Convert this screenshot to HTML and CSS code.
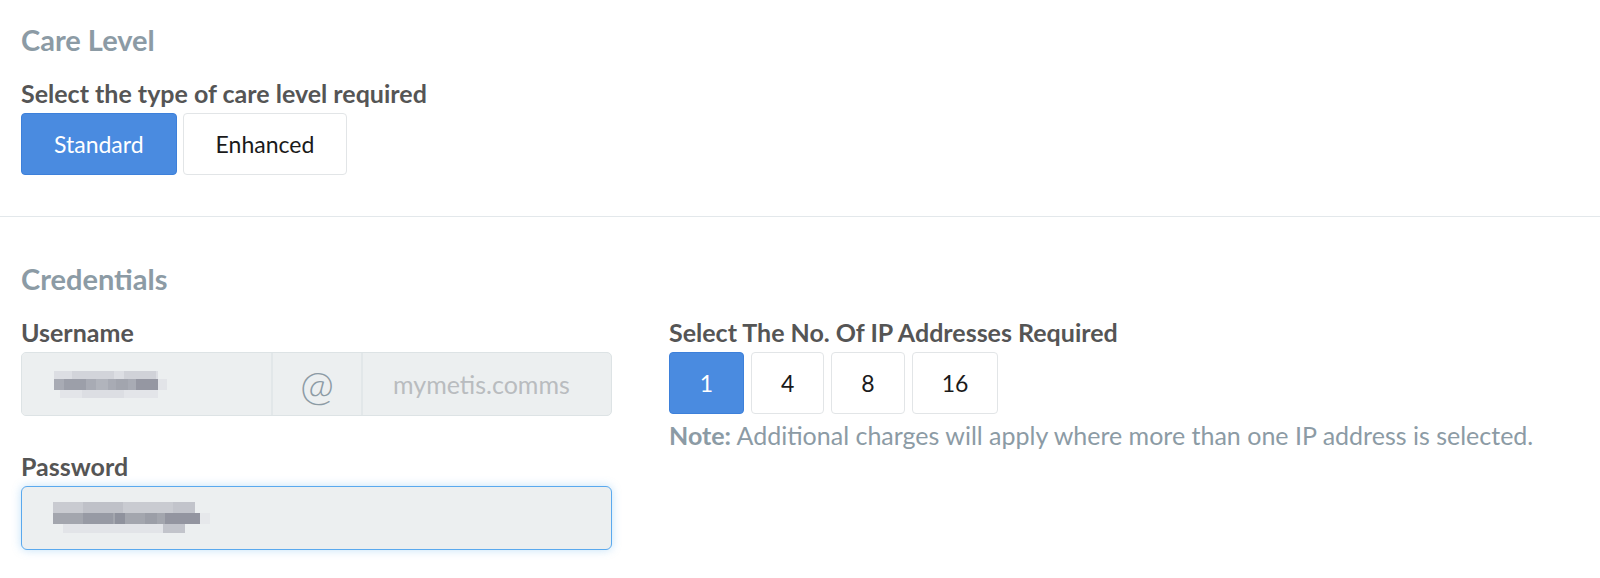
FILE: index.html
```html
<!DOCTYPE html>
<html lang="en">
<head>
    <meta charset="UTF-8">
    <meta name="viewport" content="width=device-width, initial-scale=1.0">
    <title>Order Details</title>
    <link rel="stylesheet" href="styles.css">
</head>
<body>
    <section class="panel">
        <h2 class="panel-title">Care Level</h2>
        <label class="field-label">Select the type of care level required</label>
        <div class="btn-group">
            <button class="opt-btn active">Standard</button>
            <button class="opt-btn">Enhanced</button>
        </div>
    </section>

    <section class="panel panel-bordered">
        <h2 class="panel-title">Credentials</h2>
        <div class="cols">
            <div class="col-left">
                <div class="form-group">
                    <label class="field-label" for="username">Username</label>
                    <div class="input-group">
                        <div class="input-main">
                            <svg class="censor" width="118" height="30" viewBox="0 0 118 30">
                                <rect x="0" y="0" width="118" height="30" fill="#eceff0"/>
                                <rect x="2" y="2" width="104" height="8" fill="#dcdee3"/>
                                <rect x="20" y="2" width="42" height="8" fill="#d2d4da"/>
                                <rect x="72" y="2" width="32" height="8" fill="#d0d2d8"/>
                                <rect x="2" y="10" width="104" height="11" fill="#a8abb4"/>
                                <rect x="12" y="10" width="22" height="11" fill="#9c9fa9"/>
                                <rect x="44" y="10" width="12" height="11" fill="#b1b4bc"/>
                                <rect x="64" y="10" width="12" height="11" fill="#a2a5ae"/>
                                <rect x="84" y="10" width="22" height="11" fill="#9597a2"/>
                                <rect x="106" y="10" width="9" height="11" fill="#e2e4e8"/>
                                <rect x="8" y="21" width="98" height="8" fill="#e3e5e9"/>
                                <rect x="30" y="21" width="42" height="8" fill="#dcdee3"/>
                            </svg>
                        </div>
                        <span class="input-addon">@</span>
                        <input class="input-domain" type="text" placeholder="mymetis.comms" readonly>
                    </div>
                </div>
                <div class="form-group">
                    <label class="field-label" for="password">Password</label>
                    <div class="input-main input-focus">
                        <svg class="censor" width="158" height="36" viewBox="0 0 158 36">
                            <rect x="0" y="0" width="158" height="36" fill="#eceff0"/>
                            <rect x="0" y="2" width="132" height="11" fill="#c9cbd1"/>
                            <rect x="30" y="2" width="40" height="11" fill="#bfc1c8"/>
                            <rect x="120" y="2" width="22" height="11" fill="#c2c4cb"/>
                            <rect x="0" y="13" width="147" height="11" fill="#a3a6ae"/>
                            <rect x="30" y="13" width="30" height="11" fill="#979aa4"/>
                            <rect x="62" y="13" width="10" height="11" fill="#8f929d"/>
                            <rect x="92" y="13" width="12" height="11" fill="#9b9ea7"/>
                            <rect x="112" y="13" width="35" height="11" fill="#9395a0"/>
                            <rect x="147" y="13" width="10" height="11" fill="#e6e8eb"/>
                            <rect x="10" y="24" width="100" height="9" fill="#e2e4e8"/>
                            <rect x="110" y="24" width="22" height="9" fill="#c2c4cb"/>
                        </svg>
                    </div>
                </div>
            </div>
            <div class="col-right">
                <label class="field-label">Select The No. Of IP Addresses Required</label>
                <div class="btn-group">
                    <button class="opt-btn num-btn active">1</button>
                    <button class="opt-btn num-btn">4</button>
                    <button class="opt-btn num-btn">8</button>
                    <button class="opt-btn num-btn">16</button>
                </div>
                <p class="note"><strong>Note:</strong> Additional charges will apply where more than one IP address is selected.</p>
            </div>
        </div>
    </section>
</body>
</html>
```

FILE: styles.css
```css
body {
    font-family: 'Lato', 'Liberation Sans', sans-serif;
    margin: 0;
    padding: 0;
    background-color: #fff;
    color: #222;
}

.panel {
    padding: 24px 21px 41px;
}

.panel-bordered {
    border-top: 1px solid #e3e8eb;
    padding-top: 46px;
}

.panel-title {
    margin: 0 0 24px;
    font-size: 29px;
    line-height: 32px;
    font-weight: 700;
    color: #8c9ba5;
}

.field-label {
    display: block;
    margin-bottom: 7px;
    font-size: 25px;
    line-height: 26px;
    font-weight: 700;
    color: #555;
}

.btn-group {
    display: flex;
    gap: 6px;
}

.opt-btn {
    height: 62px;
    padding: 0 32px;
    font-family: inherit;
    font-size: 23px;
    color: #1a1a1a;
    background-color: #fff;
    border: 1px solid #e2e5e7;
    border-radius: 4px;
    cursor: pointer;
}

.opt-btn.active {
    background-color: #4a8be0;
    border-color: #3d80da;
    color: #fff;
}

.btn-group .num-btn {
    padding: 0 29px;
}

.btn-group .num-btn:first-child {
    min-width: 75px;
}

.cols {
    display: flex;
}

.col-left {
    width: 591px;
    margin-right: 57px;
}

.form-group {
    margin-bottom: 37px;
}

.form-group:last-child {
    margin-bottom: 0;
}

.input-group {
    display: flex;
    height: 64px;
    border: 1px solid #dde3e5;
    border-radius: 5px;
    background-color: #eceff0;
    overflow: hidden;
    box-sizing: border-box;
}

.input-group .input-main {
    flex: 0 0 249px;
    height: auto;
    border: none;
    border-radius: 0;
    padding-left: 30px;
}

.input-main {
    display: flex;
    align-items: center;
    height: 64px;
    padding-left: 31px;
    background-color: #eceff0;
    box-sizing: border-box;
}

.input-focus {
    border: 1px solid #5aa9ee;
    border-radius: 6px;
    box-shadow: 0 0 10px rgba(82, 168, 236, 0.35);
}

.input-addon {
    display: flex;
    align-items: center;
    justify-content: center;
    width: 92px;
    border-left: 2px solid #e2e7e9;
    border-right: 2px solid #e2e7e9;
    font-size: 41px;
    font-weight: 300;
    color: #8c9ba5;
    box-sizing: border-box;
}

.input-domain {
    flex: 1;
    min-width: 0;
    padding: 0 0 0 30px;
    border: none;
    background: transparent;
    font-family: inherit;
    font-size: 25px;
    outline: none;
}

.input-domain::placeholder {
    color: #b9bcbf;
}

.col-right .btn-group {
    gap: 7px;
}

.note {
    margin: 8px 0 0;
    font-size: 25px;
    line-height: 26px;
    color: #8c9ba5;
}
```
